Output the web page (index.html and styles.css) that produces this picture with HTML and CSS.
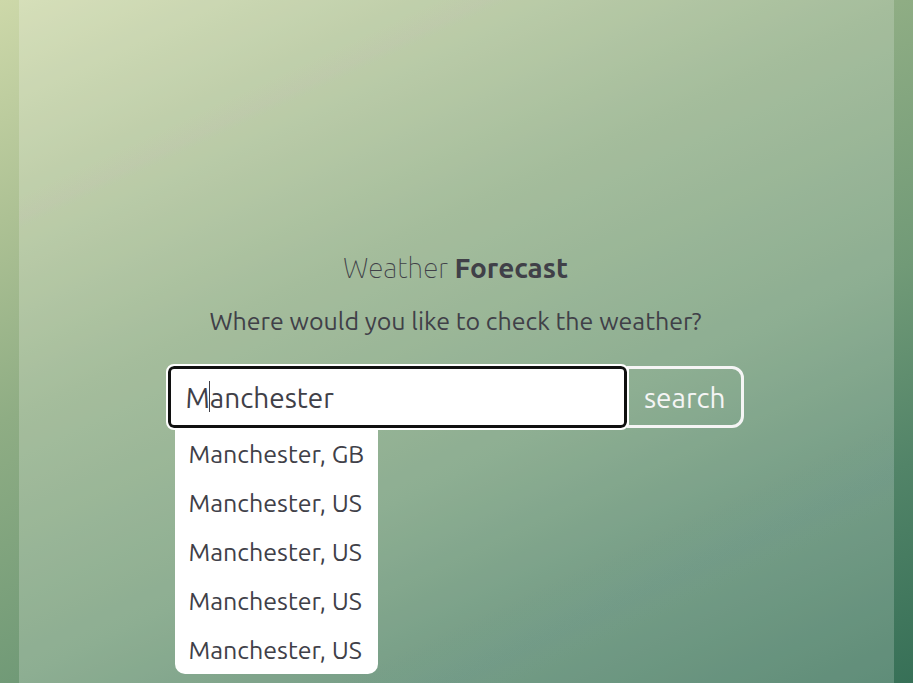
FILE: index.html
```html
<!DOCTYPE html>
<html lang="en">
<head>
<meta charset="utf-8">
<meta name="viewport" content="width=device-width, initial-scale=1">
<title>Weather Forecast</title>
<link rel="stylesheet" href="styles.css">
</head>
<body>
<main class="panel">
  <h1 class="title">Weather <strong>Forecast</strong></h1>
  <label class="prompt" for="city">Where would you like to check the weather?</label>
  <form class="search">
    <div class="field">
      <input class="city" id="city" type="text" value="Manchester" autocomplete="off">
      <span class="caret"></span>
      <ul class="suggestions">
        <li><button class="option" type="button">Manchester, GB</button></li>
        <li><button class="option" type="button">Manchester, US</button></li>
        <li><button class="option" type="button">Manchester, US</button></li>
        <li><button class="option" type="button">Manchester, US</button></li>
        <li><button class="option" type="button">Manchester, US</button></li>
      </ul>
    </div>
    <button class="submit" type="submit">search</button>
  </form>
</main>
</body>
</html>
```
FILE: styles.css
```css
* {
  box-sizing: border-box;
}

body {
  margin: 0;
  min-height: 100vh;
  display: flex;
  justify-content: center;
  color: #404048;
  font-family: Ubuntu, "Noto Sans", sans-serif;
  font-size: 25px;
  background: linear-gradient(155deg, #cdd8a9 0%, #adc194 20%, #8fad84 38%, #719a77 62%, #528468 80%, #377057 100%);
}

.panel {
  flex: 1;
  margin: 0 19px;
  padding: 0 18px 5px 16px;
  display: flex;
  flex-direction: column;
  align-items: center;
  justify-content: center;
  background:
    linear-gradient(155deg, rgba(205, 185, 190, 0) 18%, rgba(205, 185, 190, 0.12) 20%, rgba(205, 185, 190, 0) 21%),
    linear-gradient(155deg, rgba(110, 150, 150, 0) 76%, rgba(110, 150, 150, 0.1) 81%, rgba(110, 150, 150, 0) 84%),
    rgba(255, 255, 255, 0.2);
}

.title {
  margin: 0 0 19px;
  font-size: 28px;
  font-weight: 100;
  line-height: 36px;
}

.title strong {
  font-weight: 700;
}

.prompt {
  line-height: 32px;
  margin-bottom: 29px;
}

.search {
  display: flex;
  width: 100%;
  max-width: 576px;
}

.field {
  position: relative;
  flex: 1;
}

.city {
  display: block;
  width: 100%;
  height: 62px;
  padding: 0 18px;
  border: 0;
  border-radius: 6px;
  outline: 2px solid #fff;
  box-shadow: inset 0 0 0 3px #101010;
  background: #fff;
  color: inherit;
  font: inherit;
  font-size: 28px;
}

.caret {
  position: absolute;
  left: 41px;
  top: 15px;
  width: 1px;
  height: 31px;
  background: #404048;
}

.suggestions {
  position: absolute;
  top: 63px;
  left: 7px;
  margin: 0;
  padding: 0;
  list-style: none;
  background: #fff;
  border-radius: 0 0 10px 10px;
}

.option {
  display: block;
  width: 100%;
  height: 49px;
  padding: 0 14px;
  border: 0;
  background: none;
  color: inherit;
  font: inherit;
  text-align: left;
  white-space: nowrap;
}

.submit {
  height: 62px;
  padding: 0 15px;
  border: 3px solid #f5f5f5;
  border-left-width: 2px;
  border-radius: 0 12px 12px 0;
  background: none;
  color: #f5f5f5;
  font: inherit;
  font-size: 28px;
}
```
